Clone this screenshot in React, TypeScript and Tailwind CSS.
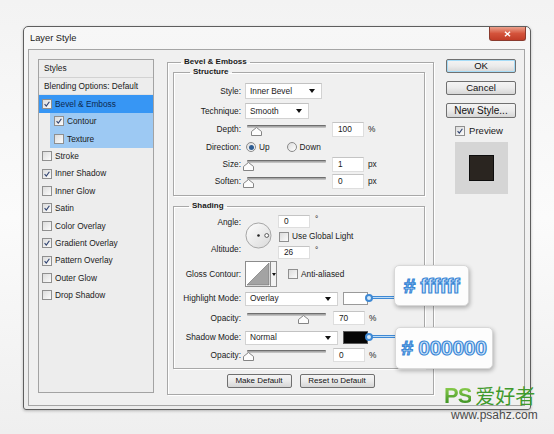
import React from 'react';

const FONT = "font-['Liberation_Sans',Arial,sans-serif]";

function Check({ on }: { on?: boolean }) {
  return (
    <span className="flex h-[10px] w-[10px] shrink-0 items-center justify-center border border-[#8f8f8f] bg-linear-to-br from-[#dcdcdc] to-[#fbfbfb]">
      {on && (
        <svg viewBox="0 0 10 10" className="h-[8px] w-[8px]">
          <path d="M2 5.3 L4.1 7.6 L8 2.2" fill="none" stroke="#2f4270" strokeWidth="1.4" />
        </svg>
      )}
    </span>
  );
}

function Radio({ on }: { on?: boolean }) {
  return (
    <span className="flex h-[10px] w-[10px] shrink-0 items-center justify-center rounded-full border border-[#8a8a8a] bg-linear-to-br from-[#dcdcdc] to-white">
      {on && <span className="h-[5px] w-[5px] rounded-full bg-[#2d5c93]" />}
    </span>
  );
}

function Arrow() {
  return (
    <svg viewBox="0 0 6 4" className="h-[4px] w-[6px]">
      <path d="M0 0 H6 L3 4 Z" fill="#111" />
    </svg>
  );
}

function Select({ text, className }: { text: string; className: string }) {
  return (
    <div
      className={`flex items-center justify-between border border-[#d2d2d2] border-t-[#c2c2c2] bg-white pl-[4px] pr-[6px] ${className}`}
    >
      <span>{text}</span>
      <Arrow />
    </div>
  );
}

function Field({ v, className = '' }: { v: string; className?: string }) {
  return (
    <div
      className={`flex w-[32px] items-center border border-[#dedede] border-t-[#c4c4c4] bg-white pl-[5px] ${className}`}
    >
      {v}
    </div>
  );
}

function Slider({ thumb }: { thumb: string }) {
  return (
    <div className="relative ml-[5px] h-[14px] w-[79px]">
      <div className="mt-[2px] h-[3px] rounded-[1px] border-t border-[#6f6f6f] bg-linear-to-b from-[#9a9a9a] to-[#cfcfcf]" />
      <svg viewBox="0 0 11 9" className={`absolute top-[4px] h-[9px] w-[11px] ${thumb}`}>
        <path d="M0.5 8.5 V4.5 L5.5 0.5 L10.5 4.5 V8.5 Z" fill="#fdfdfd" stroke="#858585" />
      </svg>
    </div>
  );
}

function Label({ children }: { children: React.ReactNode }) {
  return <span className="w-[68px] shrink-0 pr-[1px] text-right">{children}</span>;
}

function Btn({ children, className = '' }: { children: React.ReactNode; className?: string }) {
  return (
    <div
      className={`flex items-center justify-center rounded-[2px] border border-[#707070] bg-linear-to-b from-[#f4f4f4] via-[#ebebeb] to-[#d6d6d6] text-[#111] ${className}`}
    >
      {children}
    </div>
  );
}

const styleRows: [string, boolean][] = [
  ['Stroke', false],
  ['Inner Shadow', true],
  ['Inner Glow', false],
  ['Satin', true],
  ['Color Overlay', false],
  ['Gradient Overlay', true],
  ['Pattern Overlay', true],
  ['Outer Glow', false],
  ['Drop Shadow', false],
];

const groupBox =
  'border border-[#a8a8a8] shadow-[1px_1px_0_#ffffff,inset_1px_1px_0_#ffffff]';

export default function App() {
  return (
    <div
      className={`relative h-[434px] w-[554px] overflow-hidden bg-linear-to-b from-[#f3f3f3] via-[#fbfbfb] to-[#efefef] pl-[23px] pt-[26px] ${FONT}`}
    >
      {/* dialog window */}
      <div className="flex h-[384px] w-[508px] flex-col rounded-t-[5px] rounded-b-[3px] border border-[#5e5e5e] bg-linear-to-b from-[#f7f7f7] to-[#ececec] shadow-[0_1px_3px_rgba(0,0,0,0.25)]">
        <div className="flex h-[22px] shrink-0 items-start justify-between">
          <span className="pl-[6px] pt-[5px] text-[9.3px] text-[#1b1b1b]">Layer Style</span>
          <div className="mr-[4px] flex h-[14px] w-[37px] items-center justify-center rounded-b-[3px] border border-t-0 border-[#8a3b2e] bg-linear-to-b from-[#eba08c] via-[#d4533b] to-[#c13c27]">
            <svg viewBox="0 0 8 7" className="h-[6px] w-[7px]">
              <path d="M1 0.8 L7 6.2 M7 0.8 L1 6.2" stroke="#fff" strokeWidth="1.6" />
            </svg>
          </div>
        </div>

        {/* client area */}
        <div className="ml-[4px] flex h-[357px] w-[497px] items-start border border-[#a5a5a5] bg-[#f0f0f0] pl-[9px] pt-[7px] text-[8.3px] text-[#1a1a1a]">
          {/* styles list */}
          <div className="mt-[2px] flex h-[334px] w-[116px] shrink-0 flex-col border border-[#a3a3a3] bg-[#ededed]">
            <div className="flex h-[18px] shrink-0 items-center border-b border-[#d2d2d2] pl-[5px]">Styles</div>
            <div className="flex h-[17.4px] shrink-0 items-center border-b border-[#e2e2e2] pl-[5px]">
              Blending Options: Default
            </div>
            <div className="flex h-[17.4px] shrink-0 items-center gap-[3px] bg-[#3796f4] pl-[3px] text-[#0e2950]">
              <Check on />
              Bevel &amp; Emboss
            </div>
            <div className="ml-[11px] flex h-[17.4px] shrink-0 items-center gap-[3px] bg-[#9dc9f3] pl-[4px]">
              <Check on />
              Contour
            </div>
            <div className="ml-[11px] flex h-[17.4px] shrink-0 items-center gap-[3px] bg-[#9dc9f3] pl-[4px]">
              <Check />
              Texture
            </div>
            {styleRows.map(([name, on]) => (
              <div key={name} className="flex h-[17.4px] shrink-0 items-center gap-[3px] pl-[3px]">
                <Check on={on} />
                {name}
              </div>
            ))}
          </div>

          {/* bevel & emboss group */}
          <fieldset className={`ml-[13px] flex w-[267px] shrink-0 flex-col pb-[6px] ${groupBox}`}>
            <legend className="ml-[13px] h-[10px] px-[3px] text-[8px] leading-[10px] font-bold">Bevel &amp; Emboss</legend>

            <fieldset className={`ml-[5px] w-[252px] pb-[6px] ${groupBox}`}>
              <legend className="ml-[16px] h-[10px] px-[3px] text-[8px] leading-[10px] font-bold">Structure</legend>
              <div className="flex flex-col pt-[6px]">
                <div className="flex h-[16px] items-center gap-[3px]">
                  <Label>Style:</Label>
                  <Select text="Inner Bevel" className="h-[16px] w-[77px]" />
                </div>
                <div className="mt-[4px] flex h-[16px] items-center gap-[3px]">
                  <Label>Technique:</Label>
                  <Select text="Smooth" className="h-[16px] w-[64px]" />
                </div>
                <div className="mt-[3px] flex h-[15px] items-center">
                  <Label>Depth:</Label>
                  <Slider thumb="left-[4px]" />
                  <Field v="100" className="ml-[6px] h-[15px]" />
                  <span className="ml-[4px]">%</span>
                </div>
                <div className="mt-[3px] flex h-[14px] items-center">
                  <Label>Direction:</Label>
                  <span className="ml-[4px]">
                    <Radio on />
                  </span>
                  <span className="ml-[3px]">Up</span>
                  <span className="ml-[17px]">
                    <Radio />
                  </span>
                  <span className="ml-[3px]">Down</span>
                </div>
                <div className="mt-[3px] flex h-[15px] items-center">
                  <Label>Size:</Label>
                  <Slider thumb="left-[-4px]" />
                  <Field v="1" className="ml-[6px] h-[15px]" />
                  <span className="ml-[4px]">px</span>
                </div>
                <div className="mt-[2px] flex h-[15px] items-center">
                  <Label>Soften:</Label>
                  <Slider thumb="left-[-4px]" />
                  <Field v="0" className="ml-[6px] h-[15px]" />
                  <span className="ml-[4px]">px</span>
                </div>
              </div>
            </fieldset>

            <fieldset className={`ml-[5px] mt-[5px] w-[252px] pb-[6px] ${groupBox}`}>
              <legend className="ml-[15px] h-[10px] px-[3px] text-[8px] leading-[10px] font-bold">Shading</legend>
              <div className="flex flex-col pt-[4px]">
                {/* angle / altitude */}
                <div className="flex items-start">
                  <div className="flex w-[68px] shrink-0 flex-col pr-[1px] text-right">
                    <span className="h-[14px] leading-[14px]">Angle:</span>
                    <span className="mt-[13px] h-[14px] leading-[14px]">Altitude:</span>
                  </div>
                  <svg viewBox="0 0 28 28" className="ml-[3px] mt-[7px] h-[27px] w-[27px]">
                    <defs>
                      <linearGradient id="dial" x1="0" y1="0" x2="1" y2="1">
                        <stop offset="0" stopColor="#ffffff" />
                        <stop offset="1" stopColor="#d9d9d9" />
                      </linearGradient>
                    </defs>
                    <circle cx="14" cy="14" r="13" fill="url(#dial)" stroke="#a2a2a2" />
                    <circle cx="14" cy="14" r="1.3" fill="#222" />
                    <circle cx="22.5" cy="14" r="2" fill="#fff" stroke="#444" strokeWidth="0.9" />
                  </svg>
                  <div className="ml-[6px] flex flex-col">
                    <div className="flex items-center">
                      <Field v="0" className="h-[13px] w-[31px]" />
                      <span className="ml-[5px] -mt-[4px]">°</span>
                    </div>
                    <div className="ml-[1px] mt-[3px] flex h-[11px] items-center gap-[3px]">
                      <Check />
                      <span>Use Global Light</span>
                    </div>
                    <div className="mt-[4px] flex items-center">
                      <Field v="26" className="h-[13px] w-[31px]" />
                      <span className="ml-[5px] -mt-[4px]">°</span>
                    </div>
                  </div>
                </div>

                {/* gloss contour */}
                <div className="mt-[2px] flex h-[26px] items-center">
                  <Label>Gloss Contour:</Label>
                  <div className="ml-[3px] flex h-[26px] w-[32px] border border-[#8c8c8c] bg-white">
                    <svg viewBox="0 0 24 24" preserveAspectRatio="none" className="h-full w-[24px]">
                      <path d="M1 23 L23 1 V23 Z" fill="#a3a3a3" stroke="#6b6b6b" strokeWidth="0.6" />
                    </svg>
                    <div className="flex flex-1 items-center justify-center border-l border-[#8c8c8c] bg-[#f2f2f2]">
                      <svg viewBox="0 0 4 3" className="h-[3px] w-[4px]">
                        <path d="M0 0 H4 L2 3 Z" fill="#111" />
                      </svg>
                    </div>
                  </div>
                  <span className="ml-[11px]">
                    <Check />
                  </span>
                  <span className="ml-[3px]">Anti-aliased</span>
                </div>

                <div className="mt-[5px] flex h-[13px] items-center gap-[3px]">
                  <Label>Highlight Mode:</Label>
                  <Select text="Overlay" className="h-[14px] w-[93px]" />
                  <div className="ml-[2px] h-[13px] w-[25px] border border-[#9a9a9a] bg-white" />
                </div>
                <div className="mt-[6px] flex h-[14px] items-center">
                  <Label>Opacity:</Label>
                  <Slider thumb="left-[51px]" />
                  <Field v="70" className="ml-[7px] h-[14px] w-[31px]" />
                  <span className="ml-[4px]">%</span>
                </div>
                <div className="mt-[6px] flex h-[13px] items-center gap-[3px]">
                  <Label>Shadow Mode:</Label>
                  <Select text="Normal" className="h-[14px] w-[93px]" />
                  <div className="ml-[2px] h-[13px] w-[25px] border border-[#5a5a5a] bg-[#050505]" />
                </div>
                <div className="mt-[4px] flex h-[14px] items-center">
                  <Label>Opacity:</Label>
                  <Slider thumb="left-[-4px]" />
                  <Field v="0" className="ml-[7px] h-[14px] w-[31px]" />
                  <span className="ml-[4px]">%</span>
                </div>
              </div>
            </fieldset>

            <div className="mt-[5px] flex justify-center gap-[8px]">
              <Btn className="h-[14px] w-[65px] text-[8px]">Make Default</Btn>
              <Btn className="h-[14px] w-[75px] text-[8px]">Reset to Default</Btn>
            </div>
          </fieldset>

          {/* right column */}
          <div className="ml-[12px] mt-[2px] flex w-[70px] shrink-0 flex-col items-center text-[9.5px]">
            <Btn className="h-[14px] w-[70px] border-[#3c7fb1] shadow-[inset_0_0_0_1px_#a6dcf7]">OK</Btn>
            <Btn className="mt-[8px] h-[14px] w-[70px]">Cancel</Btn>
            <Btn className="mt-[8px] h-[15px] w-[70px] text-[10px]">New Style...</Btn>
            <div className="mt-[8px] flex h-[10px] items-center gap-[4px] pr-[4px]">
              <Check on />
              <span>Preview</span>
            </div>
            <div className="mt-[6px] flex h-[52px] w-[53px] items-center justify-center bg-[#d5d5d5]">
              <div className="h-[26px] w-[25px] border border-[#0d0d0d] bg-[#2a2520]" />
            </div>
          </div>
        </div>
      </div>

      {/* annotation connectors */}
      <div className="absolute left-[371px] top-[296px] h-[3px] w-[24px] border-y border-[#3f89d4] bg-[#bedcf6]" />
      <div className="absolute left-[365px] top-[294px] h-[8px] w-[8px] rounded-full border-2 border-[#3f89d4] bg-[#d6eafb]" />
      <div className="absolute left-[371px] top-[335px] h-[3px] w-[25px] border-y border-[#3f89d4] bg-[#bedcf6]" />
      <div className="absolute left-[365px] top-[333px] h-[8px] w-[8px] rounded-full border-2 border-[#3f89d4] bg-[#d6eafb]" />

      {/* annotation callouts */}
      <div className="absolute left-[394px] top-[265px] flex h-[41px] w-[75px] items-center justify-center rounded-[5px] border border-[#d8d8d8] bg-[#fdfdfd] shadow-[1px_2px_4px_rgba(0,0,0,0.28)]">
        <span className="text-[21px] font-bold tracking-[-0.5px] text-[#d3e8fb] [-webkit-text-stroke:1.2px_#3a87d6]">
          # ffffff
        </span>
      </div>
      <div className="absolute left-[395px] top-[327px] flex h-[42px] w-[98px] items-center justify-center rounded-[5px] border border-[#d8d8d8] bg-[#fdfdfd] shadow-[1px_2px_4px_rgba(0,0,0,0.28)]">
        <span className="text-[21px] font-bold tracking-[-0.3px] text-[#d3e8fb] [-webkit-text-stroke:1.2px_#3a87d6]">
          # 000000
        </span>
      </div>

      {/* watermark */}
      <div className="absolute left-[444px] top-[386px] flex flex-col">
        <div className="flex h-[20px] items-end">
          <span className="bg-linear-to-b from-[#8fd14f] to-[#2f8a1e] bg-clip-text text-[22px] leading-[20px] font-bold tracking-[-1px] text-transparent">
            PS
          </span>
          <span className="ml-[4px] font-['Noto_Sans_CJK_SC',sans-serif] text-[20px] leading-[20px] text-[#3f9a2c]">
            爱好者
          </span>
        </div>
        <span className="ml-[7px] mt-[3px] text-[12px] leading-[12px] text-[#4a4a4a]">www.psahz.com</span>
      </div>
    </div>
  );
}
